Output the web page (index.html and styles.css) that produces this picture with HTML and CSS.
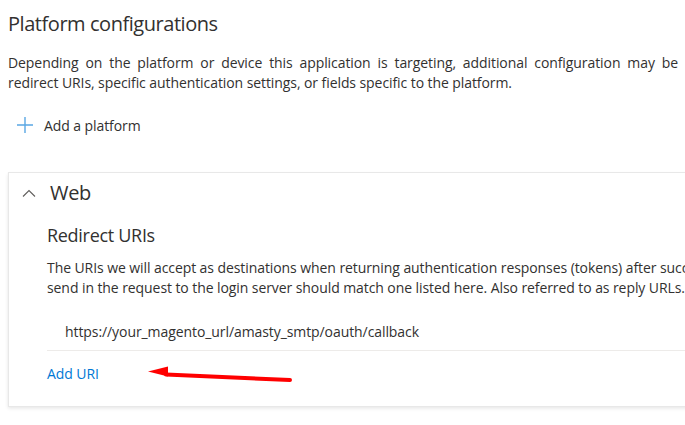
FILE: index.html
```html
<!DOCTYPE html>
<html lang="en">
<head>
<meta charset="utf-8">
<title>Platform configurations</title>
<link rel="stylesheet" href="styles.css">
</head>
<body>
<main class="page">
  <h1 class="title">Platform configurations</h1>
  <p class="intro"><span class="intro-line">Depending on the platform or device this application is targeting, additional configuration may be required such as</span>redirect URIs, specific authentication settings, or fields specific to the platform.</p>
  <button class="add-platform" type="button">
    <svg class="plus" width="18" height="18" viewBox="0 0 18 18" aria-hidden="true"><path d="M9 1v16M1 9h16" stroke="#0078d4" stroke-width="1.4" fill="none" opacity="0.65"/></svg>
    <span>Add a platform</span>
  </button>
  <section class="card">
    <div class="card-head">
      <svg class="chevron" width="14" height="8" viewBox="0 0 14 8" aria-hidden="true"><path d="M1 7.5L7 1.5l6 6" stroke="#605e5c" stroke-width="1.1" fill="none"/></svg>
      <h2 class="card-title">Web</h2>
    </div>
    <div class="card-body">
      <h3 class="section-title">Redirect URIs</h3>
      <p class="desc">The URIs we will accept as destinations when returning authentication responses (tokens) after successfully authenticating or signing out users. The redirect URI you<br>send in the request to the login server should match one listed here. Also referred to as reply URLs.</p>
      <ul class="uris">
        <li class="uri">https://your_magento_url/amasty_smtp/oauth/callback</li>
      </ul>
      <div class="add-row">
        <a class="add-uri" href="#">Add URI</a>
        <svg class="arrow" width="150" height="20" viewBox="0 0 150 20" aria-hidden="true">
          <path d="M18 9.5L142 15" stroke="#ff0000" stroke-width="4" stroke-linecap="round" fill="none"/>
          <path d="M0 6.5L20 1.5L20 11.5Z" fill="#ff0000"/>
        </svg>
      </div>
    </div>
  </section>
</main>
</body>
</html>
```
FILE: styles.css
```css
* { box-sizing: border-box; }
html, body { margin: 0; padding: 0; background: #ffffff; }
body {
  width: 685px;
  height: 425px;
  overflow: hidden;
  font-family: "Open Sans", "Noto Sans", sans-serif;
  color: #323130;
}
.page {
  padding: 0 0 0 8px;
  width: 900px;
}
.title {
  margin: 10px 0 0;
  font-size: 20px;
  line-height: 28px;
  font-weight: 400;
  letter-spacing: -0.45px;
}
.intro {
  margin: 15px 0 0;
  font-size: 14px;
  line-height: 20px;
  letter-spacing: -0.08px;
  width: 791px;
}
.intro-line {
  display: block;
  text-align: justify;
  text-align-last: justify;
}
.add-platform {
  margin: 16px 0 0;
  padding: 0 0 0 8px;
  height: 32px;
  display: flex;
  align-items: center;
  gap: 10px;
  border: 0;
  background: transparent;
  font-family: inherit;
  font-size: 14px;
  letter-spacing: -0.08px;
  color: #323130;
}
.plus { display: block; }
.card {
  margin-top: 31px;
  width: 800px;
  border: 1px solid #e8e8e8;
  box-shadow: 0 1.6px 3.6px 0 rgba(0,0,0,0.10), 0 0.3px 0.9px 0 rgba(0,0,0,0.08);
  background: #fff;
  padding-bottom: 24px;
}
.card-head {
  height: 40px;
  display: flex;
  align-items: center;
  padding-left: 13px;
}
.chevron { display: block; margin-right: 14px; }
.card-title {
  margin: 0;
  font-size: 20px;
  line-height: 28px;
  font-weight: 400;
  letter-spacing: -0.3px;
}
.card-body {
  padding-left: 38px;
}
.section-title {
  margin: 10px 0 0;
  font-size: 18px;
  line-height: 24px;
  font-weight: 400;
  letter-spacing: -0.3px;
}
.desc {
  margin: 11px 0 0;
  font-size: 14px;
  line-height: 20px;
  letter-spacing: -0.08px;
  white-space: nowrap;
}
.uris {
  list-style: none;
  margin: 16px 0 0;
  padding: 0;
}
.uri {
  padding: 8px 0 8px 18px;
  font-size: 14px;
  line-height: 20px;
  letter-spacing: -0.08px;
  border-bottom: 1px solid #edebe9;
}
.add-row {
  position: relative;
  margin-top: 11px;
  height: 20px;
}
.add-uri {
  font-size: 14px;
  line-height: 20px;
  letter-spacing: -0.08px;
  color: #0078d4;
  text-decoration: none;
}
.arrow {
  position: absolute;
  left: 101px;
  top: 3px;
}
```
